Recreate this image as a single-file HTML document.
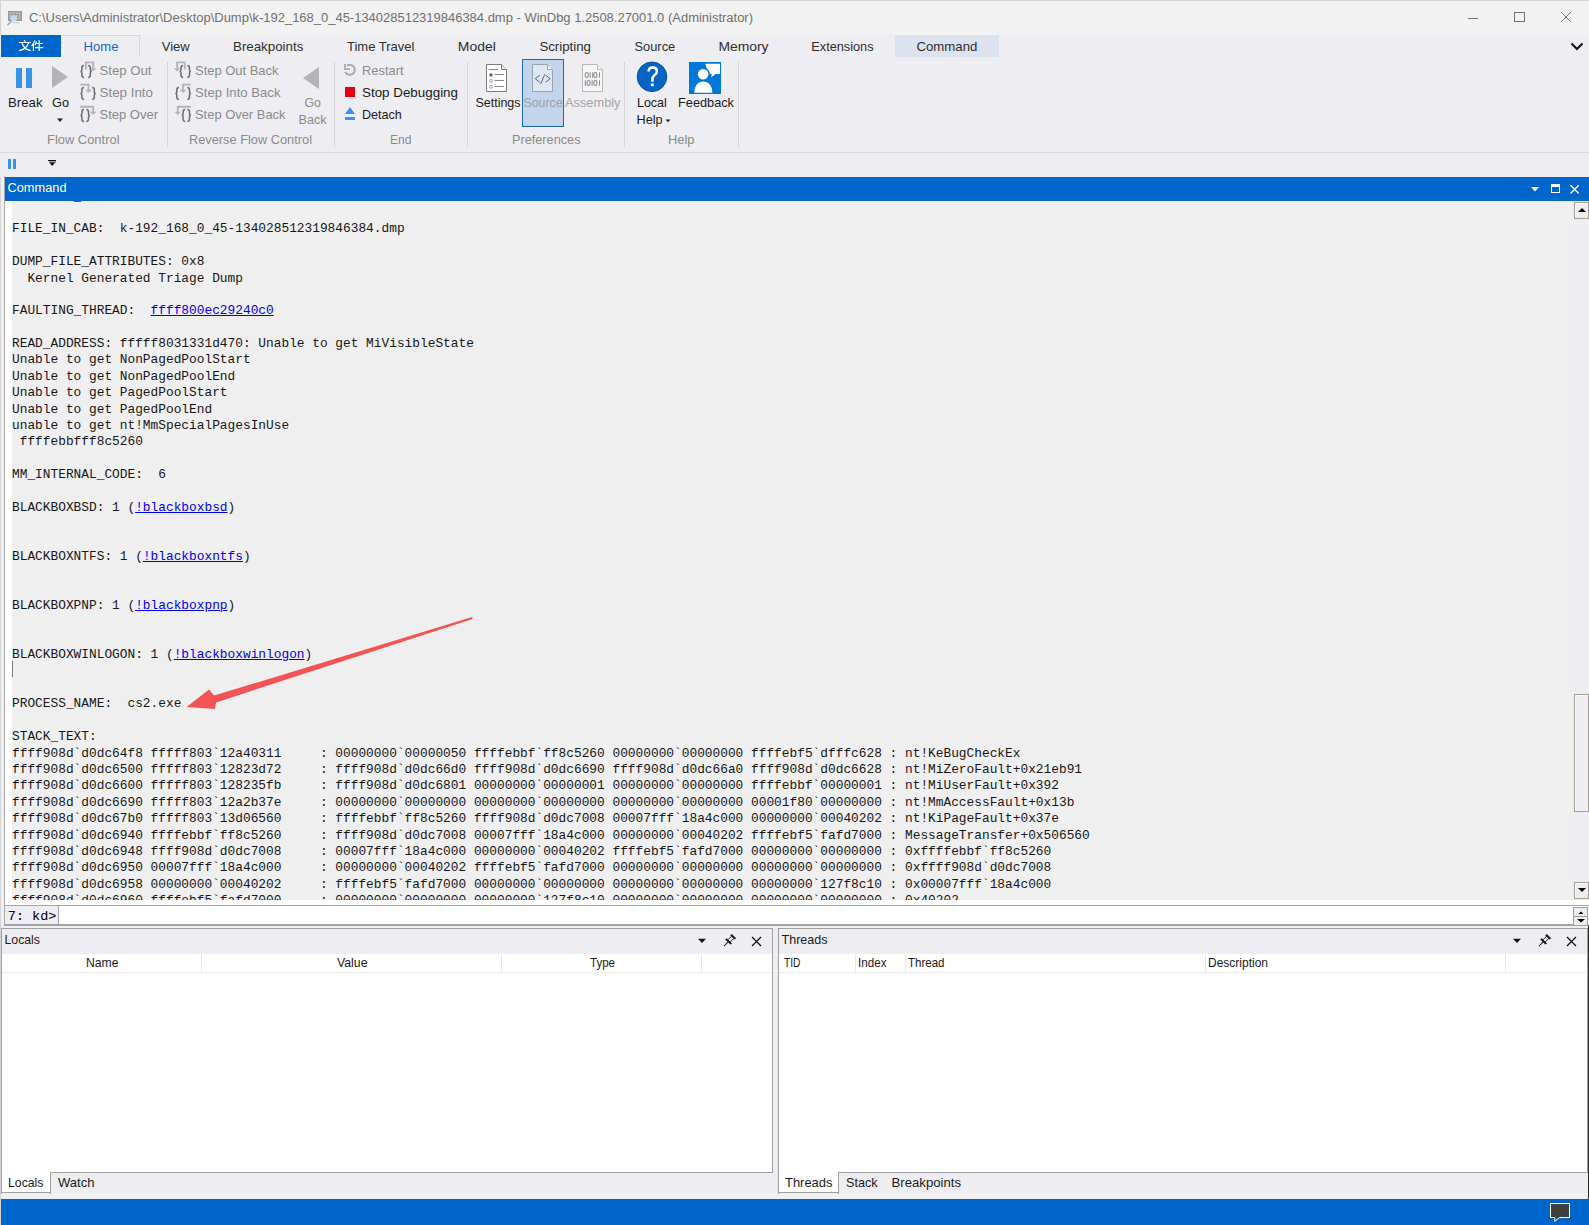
<!DOCTYPE html><html><head><meta charset="utf-8"><title>WinDbg</title><style>
*{margin:0;padding:0;box-sizing:border-box}html,body{width:1589px;height:1225px;overflow:hidden;background:#eeeef2}
svg{position:absolute;left:0;top:0}text{font-family:"Liberation Sans",sans-serif;white-space:pre}
.mono text{font-family:"Liberation Mono",monospace}
</style></head><body>
<svg width="1589" height="1225" viewBox="0 0 1589 1225" shape-rendering="crispEdges">
<rect x="0" y="0" width="1589" height="35" fill="#f2f2f2" />
<line x1="0" y1="0.5" x2="1589" y2="0.5" stroke="#d4d4d4" stroke-width="1" />
<line x1="0.5" y1="0" x2="0.5" y2="1225" stroke="#d4d4d4" stroke-width="1" />
<g shape-rendering="auto">
<rect x="8" y="11" width="14" height="10" fill="#9a9a9a" />
<rect x="9.5" y="12.5" width="2" height="1.6" fill="#c8c8c8" />
<rect x="12.5" y="12.5" width="2" height="1.6" fill="#c8c8c8" />
<rect x="15.5" y="12.5" width="2" height="1.6" fill="#c8c8c8" />
<rect x="18.5" y="12.5" width="2" height="1.6" fill="#c8c8c8" />
<rect x="9.5" y="15.1" width="2" height="1.6" fill="#c8c8c8" />
<rect x="12.5" y="15.1" width="2" height="1.6" fill="#c8c8c8" />
<rect x="15.5" y="15.1" width="2" height="1.6" fill="#c8c8c8" />
<rect x="18.5" y="15.1" width="2" height="1.6" fill="#c8c8c8" />
<rect x="9.5" y="17.7" width="2" height="1.6" fill="#c8c8c8" />
<rect x="12.5" y="17.7" width="2" height="1.6" fill="#c8c8c8" />
<rect x="15.5" y="17.7" width="2" height="1.6" fill="#c8c8c8" />
<rect x="18.5" y="17.7" width="2" height="1.6" fill="#c8c8c8" />
<circle cx="13.7" cy="18.3" r="3.3" fill="#c9d9e6"/>
<line x1="11.5" y1="21" x2="7.5" y2="25" stroke="#98a4ae" stroke-width="1.5" />
<line x1="12.5" y1="22.8" x2="19.5" y2="22.8" stroke="#c0c6cb" stroke-width="1" />
</g>
<text x="29" y="21.7" font-size="12" fill="#707070" textLength="724" lengthAdjust="spacingAndGlyphs" >C:\Users\Administrator\Desktop\Dump\k-192_168_0_45-134028512319846384.dmp - WinDbg 1.2508.27001.0 (Administrator)</text>
<line x1="1468" y1="18.5" x2="1478" y2="18.5" stroke="#717171" stroke-width="1" />
<rect x="1514.5" y="12.5" width="10" height="9" fill="none" stroke="#717171" stroke-width="1"/>
<g shape-rendering="auto">
<line x1="1561" y1="12" x2="1571" y2="22" stroke="#717171" stroke-width="1" />
<line x1="1571" y1="12" x2="1561" y2="22" stroke="#717171" stroke-width="1" />
</g>
<rect x="0" y="35" width="1589" height="118" fill="#eeeef2" />
<rect x="1" y="35" width="60" height="22" fill="#0066cc" />
<g shape-rendering="auto" stroke="#fff" stroke-width="1.15" fill="none" stroke-linecap="butt">
<path d="M24.2 40 L25.3 41.8 M19 42.5 H30.8 M22 43 C23 46.5 25.5 49.6 30.7 50.6 M28.5 43 C27.5 46.5 24.5 49.6 19.1 50.6"/>
<path d="M34.8 40.3 C34.2 42.5 33 44.5 31.6 46 M33.4 44 V51 M36.4 41.3 C36.1 42.8 35.6 44.2 34.9 45.3 M35.8 43.5 H42.8 M34.9 47.6 H43.2 M39.2 40.2 V51"/>
</g>
<line x1="61" y1="35.5" x2="139" y2="35.5" stroke="#d9d9dd" stroke-width="1" />
<line x1="139.5" y1="35" x2="139.5" y2="57" stroke="#d9d9dd" stroke-width="1" />
<text x="83.5" y="50.9" font-size="12.6" fill="#1f63c6" textLength="35" lengthAdjust="spacingAndGlyphs" >Home</text>
<rect x="895" y="35" width="104" height="22" fill="#dce3ee" />
<text x="161.7" y="50.9" font-size="12.6" fill="#2d2d2d" textLength="28.0" lengthAdjust="spacingAndGlyphs" >View</text>
<text x="233.0" y="50.9" font-size="12.6" fill="#2d2d2d" textLength="70.3" lengthAdjust="spacingAndGlyphs" >Breakpoints</text>
<text x="347.0" y="50.9" font-size="12.6" fill="#2d2d2d" textLength="67.5" lengthAdjust="spacingAndGlyphs" >Time Travel</text>
<text x="457.8" y="50.9" font-size="12.6" fill="#2d2d2d" textLength="38.0" lengthAdjust="spacingAndGlyphs" >Model</text>
<text x="539.4" y="50.9" font-size="12.6" fill="#2d2d2d" textLength="51.6" lengthAdjust="spacingAndGlyphs" >Scripting</text>
<text x="634.5" y="50.9" font-size="12.6" fill="#2d2d2d" textLength="40.7" lengthAdjust="spacingAndGlyphs" >Source</text>
<text x="718.4" y="50.9" font-size="12.6" fill="#2d2d2d" textLength="50.1" lengthAdjust="spacingAndGlyphs" >Memory</text>
<text x="811.3" y="50.9" font-size="12.6" fill="#2d2d2d" textLength="62.2" lengthAdjust="spacingAndGlyphs" >Extensions</text>
<text x="916.5" y="50.9" font-size="12.6" fill="#2d2d2d" textLength="60.8" lengthAdjust="spacingAndGlyphs" >Command</text>
<path d="M1571.5 43.5 L1577 49 L1582.5 43.5" stroke="#111" stroke-width="2" fill="none" shape-rendering="auto"/>
<line x1="0" y1="152.5" x2="1589" y2="152.5" stroke="#d9d9dc" stroke-width="1" />
<line x1="167.5" y1="62" x2="167.5" y2="147" stroke="#d6d6da" stroke-width="1" />
<line x1="334.5" y1="62" x2="334.5" y2="147" stroke="#d6d6da" stroke-width="1" />
<line x1="467.5" y1="62" x2="467.5" y2="147" stroke="#d6d6da" stroke-width="1" />
<line x1="624.5" y1="62" x2="624.5" y2="147" stroke="#d6d6da" stroke-width="1" />
<line x1="738.5" y1="62" x2="738.5" y2="147" stroke="#d6d6da" stroke-width="1" />
<g shape-rendering="auto">
<rect x="16" y="68" width="6" height="20" fill="#3893e5" />
<rect x="26" y="68" width="6" height="20" fill="#3893e5" />
<text x="8" y="107" font-size="12.8" fill="#1a1a1a" textLength="34.5" lengthAdjust="spacingAndGlyphs" >Break</text>
<path d="M52 66 L68 77 L52 88 Z" fill="#b4b4b4"/>
<text x="52" y="107" font-size="12.8" fill="#1a1a1a" textLength="17" lengthAdjust="spacingAndGlyphs" >Go</text>
<path d="M57 118.5 L63 118.5 L60 122 Z" fill="#222"/>
</g>
<g shape-rendering="auto"><path d="M85.9 69.5 L85.9 62.4 L93.2 62.4 L93.2 68.5" stroke="#b4b4b4" stroke-width="1.9" fill="none"/><path d="M89.9 68.2 L96.5 68.2 L93.2 71.5 Z" fill="#b4b4b4"/><path d="M84.0 65.6 C82.5 65.6 81.9 66.4 81.9 68 V70 C81.9 71 81.4 71.4 80.5 71.5 C81.4 71.6 81.9 72 81.9 73 V75 C81.9 76.6 82.5 77.4 84.0 77.4" stroke="#6e6e6e" stroke-width="1.5" fill="none"/><path d="M88.2 65.6 C89.7 65.6 90.3 66.4 90.3 68 V70 C90.3 71 90.8 71.4 91.7 71.5 C90.8 71.6 90.3 72 90.3 73 V75 C90.3 76.6 89.7 77.4 88.2 77.4" stroke="#6e6e6e" stroke-width="1.5" fill="none"/></g>
<g shape-rendering="auto"><path d="M80.2 84.6 L88.5 84.6 L88.5 90" stroke="#b4b4b4" stroke-width="1.9" fill="none"/><path d="M85.2 89.7 L91.8 89.7 L88.5 93 Z" fill="#b4b4b4"/><path d="M84.0 87.6 C82.5 87.6 81.9 88.4 81.9 90 V92 C81.9 93 81.4 93.4 80.5 93.5 C81.4 93.6 81.9 94 81.9 95 V97 C81.9 98.6 82.5 99.4 84.0 99.4" stroke="#6e6e6e" stroke-width="1.5" fill="none"/><path d="M92.2 87.6 C93.7 87.6 94.3 88.4 94.3 90 V92 C94.3 93 94.8 93.4 95.7 93.5 C94.8 93.6 94.3 94 94.3 95 V97 C94.3 98.6 93.7 99.4 92.2 99.4" stroke="#6e6e6e" stroke-width="1.5" fill="none"/></g>
<g shape-rendering="auto"><path d="M80.2 106.8 L93.2 106.8 L93.2 112" stroke="#b4b4b4" stroke-width="1.9" fill="none"/><path d="M89.9 111.7 L96.5 111.7 L93.2 115 Z" fill="#b4b4b4"/><path d="M84.0 109.6 C82.5 109.6 81.9 110.4 81.9 112 V114 C81.9 115 81.4 115.4 80.5 115.5 C81.4 115.6 81.9 116 81.9 117 V119 C81.9 120.6 82.5 121.4 84.0 121.4" stroke="#6e6e6e" stroke-width="1.5" fill="none"/><path d="M86.4 109.6 C87.9 109.6 88.5 110.4 88.5 112 V114 C88.5 115 89.0 115.4 89.9 115.5 C89.0 115.6 88.5 116 88.5 117 V119 C88.5 120.6 87.9 121.4 86.4 121.4" stroke="#6e6e6e" stroke-width="1.5" fill="none"/></g>
<text x="99.5" y="74.8" font-size="12.8" fill="#8a8a8a" textLength="52" lengthAdjust="spacingAndGlyphs" >Step Out</text>
<text x="99.5" y="96.69999999999999" font-size="12.8" fill="#8a8a8a" textLength="53.5" lengthAdjust="spacingAndGlyphs" >Step Into</text>
<text x="99.5" y="118.6" font-size="12.8" fill="#8a8a8a" textLength="58.5" lengthAdjust="spacingAndGlyphs" >Step Over</text>
<g shape-rendering="auto"><path d="M184.8 69.5 L184.8 62.4 L177.2 62.4 L177.2 68.5" stroke="#b4b4b4" stroke-width="1.9" fill="none"/><path d="M173.89999999999998 68.2 L180.5 68.2 L177.2 71.5 Z" fill="#b4b4b4"/><path d="M183.10000000000002 65.6 C181.60000000000002 65.6 181.0 66.4 181.0 68 V70 C181.0 71 180.5 71.4 179.60000000000002 71.5 C180.5 71.6 181.0 72 181.0 73 V75 C181.0 76.6 181.60000000000002 77.4 183.10000000000002 77.4" stroke="#6e6e6e" stroke-width="1.5" fill="none"/><path d="M187.39999999999998 65.6 C188.89999999999998 65.6 189.5 66.4 189.5 68 V70 C189.5 71 190.0 71.4 190.89999999999998 71.5 C190.0 71.6 189.5 72 189.5 73 V75 C189.5 76.6 188.89999999999998 77.4 187.39999999999998 77.4" stroke="#6e6e6e" stroke-width="1.5" fill="none"/></g>
<g shape-rendering="auto"><path d="M190.8 84.6 L183 84.6 L183 90" stroke="#b4b4b4" stroke-width="1.9" fill="none"/><path d="M179.7 89.7 L186.3 89.7 L183 93 Z" fill="#b4b4b4"/><path d="M178.9 87.6 C177.4 87.6 176.79999999999998 88.4 176.79999999999998 90 V92 C176.79999999999998 93 176.29999999999998 93.4 175.4 93.5 C176.29999999999998 93.6 176.79999999999998 94 176.79999999999998 95 V97 C176.79999999999998 98.6 177.4 99.4 178.9 99.4" stroke="#6e6e6e" stroke-width="1.5" fill="none"/><path d="M187.39999999999998 87.6 C188.89999999999998 87.6 189.5 88.4 189.5 90 V92 C189.5 93 190.0 93.4 190.89999999999998 93.5 C190.0 93.6 189.5 94 189.5 95 V97 C189.5 98.6 188.89999999999998 99.4 187.39999999999998 99.4" stroke="#6e6e6e" stroke-width="1.5" fill="none"/></g>
<g shape-rendering="auto"><path d="M190.8 106.8 L177.8 106.8 L177.8 112" stroke="#b4b4b4" stroke-width="1.9" fill="none"/><path d="M174.5 111.7 L181.10000000000002 111.7 L177.8 115 Z" fill="#b4b4b4"/><path d="M185.20000000000002 109.6 C183.70000000000002 109.6 183.1 110.4 183.1 112 V114 C183.1 115 182.6 115.4 181.70000000000002 115.5 C182.6 115.6 183.1 116 183.1 117 V119 C183.1 120.6 183.70000000000002 121.4 185.20000000000002 121.4" stroke="#6e6e6e" stroke-width="1.5" fill="none"/><path d="M187.39999999999998 109.6 C188.89999999999998 109.6 189.5 110.4 189.5 112 V114 C189.5 115 190.0 115.4 190.89999999999998 115.5 C190.0 115.6 189.5 116 189.5 117 V119 C189.5 120.6 188.89999999999998 121.4 187.39999999999998 121.4" stroke="#6e6e6e" stroke-width="1.5" fill="none"/></g>
<text x="47" y="143.8" font-size="12.6" fill="#8a8a8a" textLength="72.5" lengthAdjust="spacingAndGlyphs" >Flow Control</text>
<text x="195" y="74.8" font-size="12.8" fill="#8a8a8a" textLength="83.5" lengthAdjust="spacingAndGlyphs" >Step Out Back</text>
<text x="195" y="96.75" font-size="12.8" fill="#8a8a8a" textLength="85.5" lengthAdjust="spacingAndGlyphs" >Step Into Back</text>
<text x="195" y="118.69999999999999" font-size="12.8" fill="#8a8a8a" textLength="90.5" lengthAdjust="spacingAndGlyphs" >Step Over Back</text>
<path d="M319 67 L303 78 L319 89 Z" fill="#b4b4b4" shape-rendering="auto"/>
<text x="304.5" y="106.8" font-size="12.8" fill="#8a8a8a" textLength="16.5" lengthAdjust="spacingAndGlyphs" >Go</text>
<text x="298.5" y="123.8" font-size="12.8" fill="#8a8a8a" textLength="28" lengthAdjust="spacingAndGlyphs" >Back</text>
<text x="189" y="143.6" font-size="12.6" fill="#8a8a8a" textLength="123" lengthAdjust="spacingAndGlyphs" >Reverse Flow Control</text>
<g shape-rendering="auto" fill="none" stroke="#a9a9a9" stroke-width="2"><path d="M347 65.6 A5 5 0 1 1 345.2 71.8"/><path d="M344.9 64 V69.2 H350" stroke-width="1.7"/></g>
<text x="362" y="74.8" font-size="12.8" fill="#8a8a8a" textLength="41.5" lengthAdjust="spacingAndGlyphs" >Restart</text>
<rect x="345" y="87" width="10" height="9.5" fill="#e60012" />
<text x="362" y="96.5" font-size="12.8" fill="#1a1a1a" textLength="96" lengthAdjust="spacingAndGlyphs" >Stop Debugging</text>
<path d="M350 107 L355 114 L345 114 Z" fill="#3893e5" shape-rendering="auto"/>
<rect x="345" y="117" width="10" height="3" fill="#3893e5" />
<text x="362" y="118.7" font-size="12.8" fill="#1a1a1a" textLength="39.8" lengthAdjust="spacingAndGlyphs" >Detach</text>
<text x="390" y="143.8" font-size="12.6" fill="#8a8a8a" textLength="21.5" lengthAdjust="spacingAndGlyphs" >End</text>
<rect x="522.5" y="59.5" width="41" height="67" fill="#c3d5ec" stroke="#1a6aaa" stroke-width="1"/>
<g shape-rendering="auto"><path d="M486.5 64.5 H501.5 L506.5 69.5 V91.5 H486.5 Z" fill="#ffffff" stroke="#7b7b7b" stroke-width="1"/><path d="M501.5 64.5 V69.5 H506.5" fill="#f4f4f4" stroke="#7b7b7b" stroke-width="1"/><line x1="488.5" y1="69.5" x2="498" y2="69.5" stroke="#8a8a8a" stroke-width="1"/><circle cx="491" cy="75" r="1.7" fill="#5e5e5e"/><line x1="494.5" y1="74.5" x2="504" y2="74.5" stroke="#8a8a8a"/><circle cx="491" cy="80.8" r="1.4" fill="none" stroke="#a0a0a0"/><line x1="494.5" y1="80.5" x2="504" y2="80.5" stroke="#8a8a8a"/><circle cx="491" cy="86.8" r="1.4" fill="none" stroke="#a0a0a0"/><line x1="494.5" y1="86.5" x2="504" y2="86.5" stroke="#8a8a8a"/></g>
<text x="475.5" y="107" font-size="12.8" fill="#1a1a1a" textLength="45" lengthAdjust="spacingAndGlyphs" >Settings</text>
<g shape-rendering="auto"><path d="M532.5 64.5 H547.5 L552.5 69.5 V91.5 H532.5 Z" fill="#dfe7f2" stroke="#97a3b2" stroke-width="1"/><path d="M547.5 64.5 V69.5 H552.5" fill="#f4f4f4" stroke="#97a3b2" stroke-width="1"/><path d="M539.8 75.3 L535.2 78.7 L539.8 82.2 M544.8 74.3 L540.6 84 M545.6 75.3 L550.2 78.7 L545.6 82.2" fill="none" stroke="#5b6573" stroke-width="1"/></g>
<text x="523.5" y="107" font-size="12.8" fill="#9aa0a8" textLength="39" lengthAdjust="spacingAndGlyphs" >Source</text>
<g shape-rendering="auto"><path d="M582.5 64.5 H597.5 L602.5 69.5 V91.5 H582.5 Z" fill="#f6f6f6" stroke="#b8b8b8" stroke-width="1"/><path d="M597.5 64.5 V69.5 H602.5" fill="#f4f4f4" stroke="#b8b8b8" stroke-width="1"/><g fill="none" stroke="#8e8e8e" stroke-width="1.05"><ellipse cx="586.7" cy="75" rx="1.6" ry="2.5"/><line x1="590.2" y1="72.3" x2="590.2" y2="77.7"/><line x1="592.7" y1="72.3" x2="592.7" y2="77.7"/><ellipse cx="595.4" cy="75" rx="1.6" ry="2.5"/><line x1="599.5" y1="72.3" x2="599.5" y2="77.7"/><line x1="585.3" y1="80.3" x2="585.3" y2="85.7"/><ellipse cx="588.5" cy="83" rx="1.6" ry="2.5"/><line x1="592.1" y1="80.3" x2="592.1" y2="85.7"/><ellipse cx="595.4" cy="83" rx="1.6" ry="2.5"/><line x1="599.5" y1="80.3" x2="599.5" y2="85.7"/></g></g>
<text x="565" y="107" font-size="12.8" fill="#a5a5a5" textLength="55.5" lengthAdjust="spacingAndGlyphs" >Assembly</text>
<text x="512" y="143.8" font-size="12.6" fill="#8a8a8a" textLength="68.5" lengthAdjust="spacingAndGlyphs" >Preferences</text>
<g shape-rendering="auto"><circle cx="652" cy="76.8" r="14.8" fill="#0565c4" stroke="#0b4f92" stroke-width="1"/>
<path d="M648.6 71.6 C648.6 69 650.3 67.6 652.7 67.6 C655.3 67.6 656.9 69.2 656.9 71.4 C656.9 73.6 655.4 74.6 654.2 75.5 C653 76.4 652.4 77.5 652.4 79.5 V81.8" fill="none" stroke="#fff" stroke-width="2.5"/><rect x="650.9" y="83.5" width="2.8" height="2.7" fill="#fff"/></g>
<text x="637" y="107" font-size="12.8" fill="#1a1a1a" textLength="29.8" lengthAdjust="spacingAndGlyphs" >Local</text>
<text x="636.5" y="123.7" font-size="12.8" fill="#1a1a1a" textLength="26" lengthAdjust="spacingAndGlyphs" >Help</text>
<path d="M665.5 119.5 L670.5 119.5 L668 122.3 Z" fill="#222" shape-rendering="auto"/>
<rect x="689" y="62" width="32" height="32" fill="#0078d7" />
<g shape-rendering="auto" fill="#fff"><path d="M705.3 63.8 H720 V74 H715.6 L711.3 77.4 L711.7 74 H708.5 Z"/><circle cx="703.1" cy="74.3" r="6.8" fill="#0078d7"/><circle cx="703.1" cy="74.3" r="5.3"/><path d="M694.3 92.8 C694.3 86 698 81.6 703.3 81.6 C708.6 81.6 712.3 86 712.3 92.8 Z"/></g>
<text x="678" y="107" font-size="12.8" fill="#1a1a1a" textLength="56" lengthAdjust="spacingAndGlyphs" >Feedback</text>
<text x="668" y="143.8" font-size="12.6" fill="#8a8a8a" textLength="26.5" lengthAdjust="spacingAndGlyphs" >Help</text>
<rect x="0" y="153" width="1589" height="24" fill="#eeeef2" />
<rect x="8" y="159" width="3" height="10" fill="#3893e5" />
<rect x="13" y="159" width="3" height="10" fill="#3893e5" />
<rect x="48" y="160" width="8" height="1.3" fill="#111" />
<rect x="48.5" y="161.3" width="7" height="1.3" fill="#9a9a9a" />
<path d="M49.2 162.6 L55.2 162.6 L52.2 166 Z" fill="#111" shape-rendering="auto"/>
<rect x="1" y="176" width="4" height="1049" fill="#f0f0f0" />
<line x1="4.5" y1="176" x2="4.5" y2="926" stroke="#a8a8a8" stroke-width="1" />
<rect x="5" y="177" width="1584" height="24" fill="#0066cc" />
<text x="7.5" y="192" font-size="12.8" fill="#ffffff" textLength="59" lengthAdjust="spacingAndGlyphs" >Command</text>
<path d="M1531 187 L1539 187 L1535 191.5 Z" fill="#fff" shape-rendering="auto"/>
<rect x="1551.5" y="184.5" width="8" height="8" fill="none" stroke="#fff" stroke-width="1"/>
<rect x="1551" y="184" width="9" height="3" fill="#fff" />
<g shape-rendering="auto">
<line x1="1570.5" y1="185.3" x2="1578.8" y2="193.6" stroke="#fff" stroke-width="1.35" />
<line x1="1578.8" y1="185.3" x2="1570.5" y2="193.6" stroke="#fff" stroke-width="1.35" />
</g>
<rect x="5" y="201" width="7" height="699" fill="#ffffff" />
<rect x="12" y="201" width="1562" height="699" fill="#efefef" />
<rect x="1574" y="201" width="15" height="699" fill="#eeedf2" />
<rect x="1574.5" y="202.5" width="14" height="16" fill="#eeeef2" stroke="#a39d92" stroke-width="1"/>
<line x1="1575.5" y1="203.5" x2="1587.5" y2="203.5" stroke="#fbfbfd" stroke-width="1" />
<line x1="1575.5" y1="203.5" x2="1575.5" y2="217.5" stroke="#fbfbfd" stroke-width="1" />
<path d="M1578 212 L1586 212 L1582 208 Z" fill="#000" shape-rendering="auto"/>
<rect x="1574.5" y="694.5" width="14" height="117" fill="#eeeef2" stroke="#a39d92" stroke-width="1"/>
<line x1="1575.5" y1="695.5" x2="1587.5" y2="695.5" stroke="#fbfbfd" stroke-width="1" />
<line x1="1575.5" y1="695.5" x2="1575.5" y2="810.5" stroke="#fbfbfd" stroke-width="1" />
<rect x="1574.5" y="882.5" width="14" height="16" fill="#eeeef2" stroke="#a39d92" stroke-width="1"/>
<line x1="1575.5" y1="883.5" x2="1587.5" y2="883.5" stroke="#fbfbfd" stroke-width="1" />
<line x1="1575.5" y1="883.5" x2="1575.5" y2="897.5" stroke="#fbfbfd" stroke-width="1" />
<path d="M1578 888 L1586 888 L1582 892 Z" fill="#000" shape-rendering="auto"/>
<rect x="5" y="900" width="1584" height="5" fill="#ffffff" />
<line x1="4" y1="905.5" x2="1589" y2="905.5" stroke="#a0a3a8" stroke-width="1" />
<rect x="5" y="906" width="1584" height="18" fill="#ffffff" />
<rect x="5" y="906" width="53" height="18" fill="#eeeef2" />
<line x1="58.5" y1="906" x2="58.5" y2="924" stroke="#a0a3a8" stroke-width="1" />
<rect x="4" y="924" width="1585" height="2" fill="#a0a3a8" />
<rect x="1573.5" y="907.5" width="14" height="8.5" fill="#eeeef2" stroke="#a39d92" stroke-width="1"/>
<rect x="1573.5" y="916" width="14" height="9" fill="#eeeef2" stroke="#a39d92" stroke-width="1"/>
<path d="M1578.5 914 L1583.5 914 L1581 911.5 Z" fill="#000" shape-rendering="auto"/><path d="M1577 919 L1585 919 L1581 922.5 Z" fill="#000" shape-rendering="auto"/>
</svg>
<div style="position:absolute;left:12px;top:201px;width:1562px;height:699px;overflow:hidden">
<div style="position:absolute;left:0;top:-4.31px;height:0;font:12.833px/0 'Liberation Mono',monospace;white-space:pre;color:#161616">BUGCHECK_P4: 0</div>
<div style="position:absolute;left:0;top:28.45px;height:0;font:12.833px/0 'Liberation Mono',monospace;white-space:pre;color:#161616">FILE_IN_CAB:  k-192_168_0_45-134028512319846384.dmp</div>
<div style="position:absolute;left:0;top:61.21px;height:0;font:12.833px/0 'Liberation Mono',monospace;white-space:pre;color:#161616">DUMP_FILE_ATTRIBUTES: 0x8</div>
<div style="position:absolute;left:0;top:77.59px;height:0;font:12.833px/0 'Liberation Mono',monospace;white-space:pre;color:#161616">  Kernel Generated Triage Dump</div>
<div style="position:absolute;left:0;top:110.35px;height:0;font:12.833px/0 'Liberation Mono',monospace;white-space:pre;color:#161616">FAULTING_THREAD:  <span style='color:#0000ee;text-decoration:underline'>ffff800ec29240c0</span></div>
<div style="position:absolute;left:0;top:143.11px;height:0;font:12.833px/0 'Liberation Mono',monospace;white-space:pre;color:#161616">READ_ADDRESS: fffff8031331d470: Unable to get MiVisibleState</div>
<div style="position:absolute;left:0;top:159.49px;height:0;font:12.833px/0 'Liberation Mono',monospace;white-space:pre;color:#161616">Unable to get NonPagedPoolStart</div>
<div style="position:absolute;left:0;top:175.87px;height:0;font:12.833px/0 'Liberation Mono',monospace;white-space:pre;color:#161616">Unable to get NonPagedPoolEnd</div>
<div style="position:absolute;left:0;top:192.25px;height:0;font:12.833px/0 'Liberation Mono',monospace;white-space:pre;color:#161616">Unable to get PagedPoolStart</div>
<div style="position:absolute;left:0;top:208.63px;height:0;font:12.833px/0 'Liberation Mono',monospace;white-space:pre;color:#161616">Unable to get PagedPoolEnd</div>
<div style="position:absolute;left:0;top:225.01px;height:0;font:12.833px/0 'Liberation Mono',monospace;white-space:pre;color:#161616">unable to get nt!MmSpecialPagesInUse</div>
<div style="position:absolute;left:0;top:241.39px;height:0;font:12.833px/0 'Liberation Mono',monospace;white-space:pre;color:#161616"> ffffebbfff8c5260</div>
<div style="position:absolute;left:0;top:274.15px;height:0;font:12.833px/0 'Liberation Mono',monospace;white-space:pre;color:#161616">MM_INTERNAL_CODE:  6</div>
<div style="position:absolute;left:0;top:306.91px;height:0;font:12.833px/0 'Liberation Mono',monospace;white-space:pre;color:#161616">BLACKBOXBSD: 1 (<span style='color:#0000ee;text-decoration:underline'>!blackboxbsd</span>)</div>
<div style="position:absolute;left:0;top:356.05px;height:0;font:12.833px/0 'Liberation Mono',monospace;white-space:pre;color:#161616">BLACKBOXNTFS: 1 (<span style='color:#0000ee;text-decoration:underline'>!blackboxntfs</span>)</div>
<div style="position:absolute;left:0;top:405.19px;height:0;font:12.833px/0 'Liberation Mono',monospace;white-space:pre;color:#161616">BLACKBOXPNP: 1 (<span style='color:#0000ee;text-decoration:underline'>!blackboxpnp</span>)</div>
<div style="position:absolute;left:0;top:454.33px;height:0;font:12.833px/0 'Liberation Mono',monospace;white-space:pre;color:#161616">BLACKBOXWINLOGON: 1 (<span style='color:#0000ee;text-decoration:underline'>!blackboxwinlogon</span>)</div>
<div style="position:absolute;left:0;top:503.47px;height:0;font:12.833px/0 'Liberation Mono',monospace;white-space:pre;color:#161616">PROCESS_NAME:  cs2.exe</div>
<div style="position:absolute;left:0;top:536.23px;height:0;font:12.833px/0 'Liberation Mono',monospace;white-space:pre;color:#161616">STACK_TEXT:  </div>
<div style="position:absolute;left:0;top:552.61px;height:0;font:12.833px/0 'Liberation Mono',monospace;white-space:pre;color:#161616">ffff908d`d0dc64f8 fffff803`12a40311     : 00000000`00000050 ffffebbf`ff8c5260 00000000`00000000 ffffebf5`dfffc628 : nt!KeBugCheckEx</div>
<div style="position:absolute;left:0;top:568.99px;height:0;font:12.833px/0 'Liberation Mono',monospace;white-space:pre;color:#161616">ffff908d`d0dc6500 fffff803`12823d72     : ffff908d`d0dc66d0 ffff908d`d0dc6690 ffff908d`d0dc66a0 ffff908d`d0dc6628 : nt!MiZeroFault+0x21eb91</div>
<div style="position:absolute;left:0;top:585.37px;height:0;font:12.833px/0 'Liberation Mono',monospace;white-space:pre;color:#161616">ffff908d`d0dc6600 fffff803`128235fb     : ffff908d`d0dc6801 00000000`00000001 00000000`00000000 ffffebbf`00000001 : nt!MiUserFault+0x392</div>
<div style="position:absolute;left:0;top:601.75px;height:0;font:12.833px/0 'Liberation Mono',monospace;white-space:pre;color:#161616">ffff908d`d0dc6690 fffff803`12a2b37e     : 00000000`00000000 00000000`00000000 00000000`00000000 00001f80`00000000 : nt!MmAccessFault+0x13b</div>
<div style="position:absolute;left:0;top:618.13px;height:0;font:12.833px/0 'Liberation Mono',monospace;white-space:pre;color:#161616">ffff908d`d0dc67b0 fffff803`13d06560     : ffffebbf`ff8c5260 ffff908d`d0dc7008 00007fff`18a4c000 00000000`00040202 : nt!KiPageFault+0x37e</div>
<div style="position:absolute;left:0;top:634.51px;height:0;font:12.833px/0 'Liberation Mono',monospace;white-space:pre;color:#161616">ffff908d`d0dc6940 ffffebbf`ff8c5260     : ffff908d`d0dc7008 00007fff`18a4c000 00000000`00040202 ffffebf5`fafd7000 : MessageTransfer+0x506560</div>
<div style="position:absolute;left:0;top:650.89px;height:0;font:12.833px/0 'Liberation Mono',monospace;white-space:pre;color:#161616">ffff908d`d0dc6948 ffff908d`d0dc7008     : 00007fff`18a4c000 00000000`00040202 ffffebf5`fafd7000 00000000`00000000 : 0xffffebbf`ff8c5260</div>
<div style="position:absolute;left:0;top:667.27px;height:0;font:12.833px/0 'Liberation Mono',monospace;white-space:pre;color:#161616">ffff908d`d0dc6950 00007fff`18a4c000     : 00000000`00040202 ffffebf5`fafd7000 00000000`00000000 00000000`00000000 : 0xffff908d`d0dc7008</div>
<div style="position:absolute;left:0;top:683.65px;height:0;font:12.833px/0 'Liberation Mono',monospace;white-space:pre;color:#161616">ffff908d`d0dc6958 00000000`00040202     : ffffebf5`fafd7000 00000000`00000000 00000000`00000000 00000000`127f8c10 : 0x00007fff`18a4c000</div>
<div style="position:absolute;left:0;top:700.03px;height:0;font:12.833px/0 'Liberation Mono',monospace;white-space:pre;color:#161616">ffff908d`d0dc6960 ffffebf5`fafd7000     : 00000000`00000000 00000000`127f8c10 00000000`00000000 00000000`00000000 : 0x40202</div>
</div>
<div style="position:absolute;left:12px;top:661px;width:1px;height:16px;background:#777"></div>
<svg width="1589" height="1225" style="position:absolute;left:0;top:0"><path d="M472 617 L472.6 618.9 L216 702.5 L215 709 L186.5 707 L209 689.5 L214 695.6 Z" fill="#f25455"/></svg>
<div style="position:absolute;left:7.8px;top:917.2px;height:0;font:13.5px/0 'Liberation Mono',monospace;white-space:pre;color:#000">7: kd&gt;</div>
<svg width="1589" height="1225" style="position:absolute;left:0;top:0" shape-rendering="crispEdges">
<rect x="1" y="926" width="1588" height="272" fill="#f0f0f0" />
<rect x="1" y="1193" width="1588" height="5" fill="#f1f1f1" />
<rect x="773" y="928" width="5" height="265" fill="#eeeef2" />
<rect x="1" y="928" width="772" height="245" fill="#ffffff" />
<rect x="2" y="929" width="770" height="25" fill="#eeeef2" />
<line x1="1" y1="928.5" x2="773" y2="928.5" stroke="#a0a0a0" stroke-width="1" />
<line x1="1.5" y1="928" x2="1.5" y2="1193.5" stroke="#a0a0a0" stroke-width="1" />
<line x1="772.5" y1="928" x2="772.5" y2="1172.5" stroke="#a0a0a0" stroke-width="1" />
<rect x="2" y="1173" width="771" height="20" fill="#eeeef2" />
<rect x="2" y="1172" width="48" height="21" fill="#ffffff" />
<line x1="50.5" y1="1172" x2="50.5" y2="1193.5" stroke="#a0a0a0" stroke-width="1" />
<line x1="1" y1="1192.5" x2="51" y2="1192.5" stroke="#a0a0a0" stroke-width="1" />
<line x1="50" y1="1172.5" x2="773" y2="1172.5" stroke="#a0a0a0" stroke-width="1" />
<text x="4.5" y="944" font-size="12.8" fill="#1a1a1a" textLength="35.5" lengthAdjust="spacingAndGlyphs" >Locals</text>
<text x="8" y="1187.2" font-size="12.8" fill="#1a1a1a" textLength="35.5" lengthAdjust="spacingAndGlyphs" >Locals</text>
<text x="58" y="1187.2" font-size="12.8" fill="#1a1a1a" textLength="36.5" lengthAdjust="spacingAndGlyphs" >Watch</text>
<rect x="778" y="928" width="810" height="245" fill="#ffffff" />
<rect x="779" y="929" width="808" height="25" fill="#eeeef2" />
<line x1="778" y1="928.5" x2="1588" y2="928.5" stroke="#a0a0a0" stroke-width="1" />
<line x1="778.5" y1="928" x2="778.5" y2="1193.5" stroke="#a0a0a0" stroke-width="1" />
<line x1="1587.5" y1="928" x2="1587.5" y2="1172.5" stroke="#a0a0a0" stroke-width="1" />
<rect x="779" y="1173" width="809" height="20" fill="#eeeef2" />
<rect x="779" y="1172" width="59" height="21" fill="#ffffff" />
<line x1="838.5" y1="1172" x2="838.5" y2="1193.5" stroke="#a0a0a0" stroke-width="1" />
<line x1="778" y1="1192.5" x2="839" y2="1192.5" stroke="#a0a0a0" stroke-width="1" />
<line x1="838" y1="1172.5" x2="1588" y2="1172.5" stroke="#a0a0a0" stroke-width="1" />
<text x="781.5" y="944" font-size="12.8" fill="#1a1a1a" textLength="46" lengthAdjust="spacingAndGlyphs" >Threads</text>
<text x="785" y="1187.2" font-size="12.8" fill="#1a1a1a" textLength="47.5" lengthAdjust="spacingAndGlyphs" >Threads</text>
<text x="846" y="1187.2" font-size="12.8" fill="#1a1a1a" textLength="31.5" lengthAdjust="spacingAndGlyphs" >Stack</text>
<text x="891.5" y="1187.2" font-size="12.8" fill="#1a1a1a" textLength="69.5" lengthAdjust="spacingAndGlyphs" >Breakpoints</text>
<line x1="1588.5" y1="926" x2="1588.5" y2="1199" stroke="#2a2a2a" stroke-width="1" />
<path d="M698 938.8 L706 938.8 L702 943 Z" fill="#111" shape-rendering="auto"/>
<g shape-rendering="auto" transform="translate(729 941) rotate(45) scale(0.88)" fill="none" stroke="#111" stroke-width="1"><path d="M-3 -7.5 H3 V-6 H-3 Z" fill="#111"/><path d="M-1.8 -6 V0 M1.8 -6 V0"/><path d="M-3.8 0 H3.8 V1.3 H-3.8 Z" fill="#111"/><path d="M0 1.3 V8" stroke-width="1.1"/></g>
<g shape-rendering="auto"><line x1="752" y1="937" x2="761" y2="946" stroke="#111" stroke-width="1.25"/><line x1="761" y1="937" x2="752" y2="946" stroke="#111" stroke-width="1.25"/></g>
<path d="M1513 938.8 L1521 938.8 L1517 943 Z" fill="#111" shape-rendering="auto"/>
<g shape-rendering="auto" transform="translate(1544 941) rotate(45) scale(0.88)" fill="none" stroke="#111" stroke-width="1"><path d="M-3 -7.5 H3 V-6 H-3 Z" fill="#111"/><path d="M-1.8 -6 V0 M1.8 -6 V0"/><path d="M-3.8 0 H3.8 V1.3 H-3.8 Z" fill="#111"/><path d="M0 1.3 V8" stroke-width="1.1"/></g>
<g shape-rendering="auto"><line x1="1567" y1="937" x2="1576" y2="946" stroke="#111" stroke-width="1.25"/><line x1="1576" y1="937" x2="1567" y2="946" stroke="#111" stroke-width="1.25"/></g>
<line x1="2" y1="972.5" x2="772" y2="972.5" stroke="#ececec" stroke-width="1" />
<line x1="201.5" y1="954" x2="201.5" y2="972" stroke="#e8e8e8" stroke-width="1" />
<line x1="501.5" y1="954" x2="501.5" y2="972" stroke="#e8e8e8" stroke-width="1" />
<line x1="701.5" y1="954" x2="701.5" y2="972" stroke="#e8e8e8" stroke-width="1" />
<text x="86" y="966.8" font-size="12.6" fill="#1a1a1a" textLength="32.5" lengthAdjust="spacingAndGlyphs" >Name</text>
<text x="337" y="966.8" font-size="12.6" fill="#1a1a1a" textLength="30.5" lengthAdjust="spacingAndGlyphs" >Value</text>
<text x="590" y="966.8" font-size="12.6" fill="#1a1a1a" textLength="25" lengthAdjust="spacingAndGlyphs" >Type</text>
<line x1="779" y1="972.5" x2="1587" y2="972.5" stroke="#ececec" stroke-width="1" />
<line x1="855.5" y1="954" x2="855.5" y2="972" stroke="#e8e8e8" stroke-width="1" />
<line x1="905.5" y1="954" x2="905.5" y2="972" stroke="#e8e8e8" stroke-width="1" />
<line x1="1205.5" y1="954" x2="1205.5" y2="972" stroke="#e8e8e8" stroke-width="1" />
<line x1="1505.5" y1="954" x2="1505.5" y2="972" stroke="#e8e8e8" stroke-width="1" />
<text x="784" y="966.8" font-size="12.6" fill="#1a1a1a" textLength="16.5" lengthAdjust="spacingAndGlyphs" >TID</text>
<text x="858" y="966.8" font-size="12.6" fill="#1a1a1a" textLength="28.5" lengthAdjust="spacingAndGlyphs" >Index</text>
<text x="908" y="966.8" font-size="12.6" fill="#1a1a1a" textLength="36.5" lengthAdjust="spacingAndGlyphs" >Thread</text>
<text x="1208" y="966.8" font-size="12.6" fill="#1a1a1a" textLength="60" lengthAdjust="spacingAndGlyphs" >Description</text>
<rect x="1" y="1199" width="1588" height="26" fill="#0066cc" />
<path d="M1550.5 1203.5 H1569.5 V1217.5 H1559.5 L1554.8 1221.3 V1217.5 H1550.5 Z" fill="#404040" stroke="#fff" stroke-width="1" shape-rendering="auto"/>
</svg>
</body></html>
